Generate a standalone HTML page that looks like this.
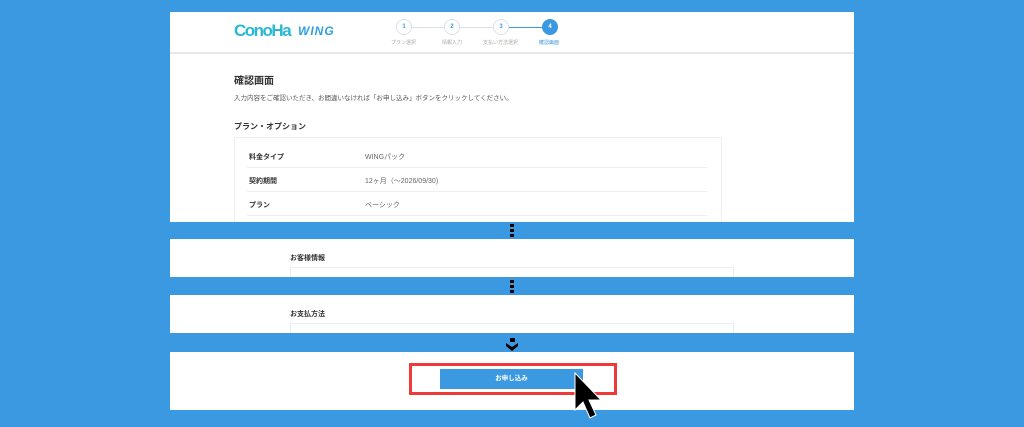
<!DOCTYPE html>
<html><head><meta charset="utf-8"><style>
body{margin:0;width:1024px;height:427px;background:#3a99e0;position:relative;overflow:hidden;font-family:"Liberation Sans","Noto Sans CJK JP",sans-serif;color:#333}
.p{position:absolute;left:170px;width:684px;background:#fff;overflow:hidden}
.t{position:absolute;white-space:nowrap}
.dot{position:absolute;left:510px;width:4px;height:3px;background:#000}
.c{position:absolute;width:14px;height:14px;border-radius:50%;border:1px solid #d8e2ec;background:#fff;font-size:6px;color:#3a99e0;text-align:center;line-height:14px;font-weight:bold}
.lb{position:absolute;font-size:5px;color:#aaa;white-space:nowrap}
.row{position:absolute;left:77px;width:460px;border-bottom:1px solid #eee;height:24px;font-size:7px}
</style></head><body>
<div class="p" style="top:12px;height:210px">
 <div style="position:absolute;left:0;top:0;width:684px;height:40px;border-bottom:2px solid #e8e8e8"></div>
 <div class="t" style="left:64px;top:9px;font-size:17px;font-weight:bold;color:#2bb7d6;letter-spacing:-1.5px">ConoHa</div>
 <div class="t" style="left:128px;top:12px;font-size:12px;font-weight:bold;font-style:italic;color:#2f9fe0;letter-spacing:1px">WING</div>
 <div style="position:absolute;left:238px;top:15px;width:100px;height:1px;background:#dde"></div>
 <div style="position:absolute;left:338px;top:15px;width:40px;height:1px;background:#3a99e0"></div>
 <div class="c" style="left:226px;top:7px">1</div>
 <div class="c" style="left:274px;top:7px">2</div>
 <div class="c" style="left:323px;top:7px">3</div>
 <div class="c" style="left:372px;top:7px;background:#3a99e0;color:#fff;border-color:#3a99e0">4</div>
 <div class="lb" style="left:221px;top:27px">プラン選択</div>
 <div class="lb" style="left:272px;top:27px">情報入力</div>
 <div class="lb" style="left:313px;top:27px">支払い方法選択</div>
 <div class="lb" style="left:369px;top:27px;color:#3a99e0">確認画面</div>
 <div class="t" style="left:64px;top:60px;font-size:10px;font-weight:bold">確認画面</div>
 <div class="t" style="left:64px;top:80px;font-size:6.5px;color:#555">入力内容をご確認いただき、お間違いなければ「お申し込み」ボタンをクリックしてください。</div>
 <div class="t" style="left:64px;top:109px;font-size:8px;font-weight:bold">プラン・オプション</div>
 <div style="position:absolute;left:64px;top:125px;width:486px;height:100px;border:1px solid #eee"></div>
 <div class="row" style="top:131px"><span class="t" style="left:2px;top:9px;font-weight:bold">料金タイプ</span><span class="t" style="left:118px;top:9px;color:#666">WINGパック</span></div>
 <div class="row" style="top:155px"><span class="t" style="left:2px;top:9px;font-weight:bold">契約期間</span><span class="t" style="left:118px;top:9px;color:#666">12ヶ月（〜2026/09/30)</span></div>
 <div class="row" style="top:179px"><span class="t" style="left:2px;top:9px;font-weight:bold">プラン</span><span class="t" style="left:118px;top:9px;color:#666">ベーシック</span></div>
</div>
<div class="p" style="top:239px;height:38px">
 <div class="t" style="left:120px;top:14px;font-size:7px;font-weight:bold">お客様情報</div>
 <div style="position:absolute;left:120px;top:28px;width:442px;height:20px;border:1px solid #eee"></div>
</div>
<div class="p" style="top:295px;height:38px">
 <div class="t" style="left:120px;top:14px;font-size:7px;font-weight:bold">お支払方法</div>
 <div style="position:absolute;left:120px;top:28px;width:442px;height:20px;border:1px solid #eee"></div>
</div>
<div class="p" style="top:352px;height:58px">
 <div style="position:absolute;left:239px;top:11px;width:208px;height:32px;border:3px solid #f03a3a;box-sizing:border-box"></div>
 <div style="position:absolute;left:270px;top:17px;width:143px;height:20px;background:#3a99e0;color:#fff;font-size:6.5px;text-align:center;line-height:20px;font-weight:bold">お申し込み</div>
</div>
<div class="dot" style="top:224px"></div><div class="dot" style="top:229px"></div><div class="dot" style="top:234px"></div>
<div class="dot" style="top:280px"></div><div class="dot" style="top:285px"></div><div class="dot" style="top:290px"></div>
<div class="dot" style="top:338px;left:510px;width:5px;height:4px"></div>
<svg style="position:absolute;left:505px;top:342px" width="14" height="10"><path d="M1 1 L7 5 L13 1 L13 4 L7 9 L1 4Z" fill="#000"/></svg>
<svg style="position:absolute;left:572px;top:372px" width="32" height="48"><path d="M3 1 L3 38 L11 30 L18 46 L24 43 L17 28 L29 28 Z" fill="#000" stroke="#fff" stroke-width="1"/></svg>
</body></html>
